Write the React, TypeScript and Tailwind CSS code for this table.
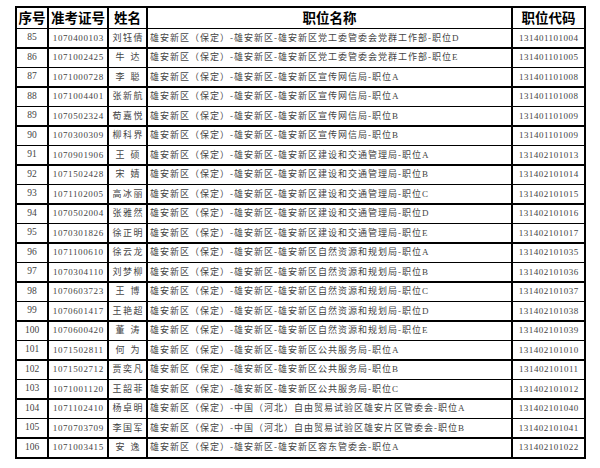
const rows: [string, string, string, string, string][] = [
  ["85", "1070400103", "刘钰倩", "雄安新区（保定）-雄安新区-雄安新区党工委管委会党群工作部-职位D", "131401101004"],
  ["86", "1071002425", "牛达", "雄安新区（保定）-雄安新区-雄安新区党工委管委会党群工作部-职位E", "131401101005"],
  ["87", "1071000728", "李聪", "雄安新区（保定）-雄安新区-雄安新区宣传网信局-职位A", "131401101008"],
  ["88", "1071004401", "张新航", "雄安新区（保定）-雄安新区-雄安新区宣传网信局-职位A", "131401101008"],
  ["89", "1070502324", "荀嘉悦", "雄安新区（保定）-雄安新区-雄安新区宣传网信局-职位B", "131401101009"],
  ["90", "1070300309", "柳科界", "雄安新区（保定）-雄安新区-雄安新区宣传网信局-职位B", "131401101009"],
  ["91", "1070901906", "王硕", "雄安新区（保定）-雄安新区-雄安新区建设和交通管理局-职位A", "131402101013"],
  ["92", "1071502428", "宋婧", "雄安新区（保定）-雄安新区-雄安新区建设和交通管理局-职位B", "131402101014"],
  ["93", "1071102005", "高冰丽", "雄安新区（保定）-雄安新区-雄安新区建设和交通管理局-职位C", "131402101015"],
  ["94", "1070502004", "张雅然", "雄安新区（保定）-雄安新区-雄安新区建设和交通管理局-职位D", "131402101016"],
  ["95", "1070301826", "徐正明", "雄安新区（保定）-雄安新区-雄安新区建设和交通管理局-职位E", "131402101017"],
  ["96", "1071100610", "徐云龙", "雄安新区（保定）-雄安新区-雄安新区自然资源和规划局-职位A", "131402101035"],
  ["97", "1070304110", "刘梦柳", "雄安新区（保定）-雄安新区-雄安新区自然资源和规划局-职位B", "131402101036"],
  ["98", "1070603723", "王博", "雄安新区（保定）-雄安新区-雄安新区自然资源和规划局-职位C", "131402101037"],
  ["99", "1070601417", "王艳超", "雄安新区（保定）-雄安新区-雄安新区自然资源和规划局-职位D", "131402101038"],
  ["100", "1070600420", "董涛", "雄安新区（保定）-雄安新区-雄安新区自然资源和规划局-职位E", "131402101039"],
  ["101", "1071502811", "何为", "雄安新区（保定）-雄安新区-雄安新区公共服务局-职位A", "131402101010"],
  ["102", "1071502712", "贾奕凡", "雄安新区（保定）-雄安新区-雄安新区公共服务局-职位B", "131402101011"],
  ["103", "1071001120", "王韶菲", "雄安新区（保定）-雄安新区-雄安新区公共服务局-职位C", "131402101012"],
  ["104", "1071102410", "杨卓明", "雄安新区（保定）-中国（河北）自由贸易试验区雄安片区管委会-职位A", "131402101040"],
  ["105", "1070703709", "李国军", "雄安新区（保定）-中国（河北）自由贸易试验区雄安片区管委会-职位B", "131402101041"],
  ["106", "1071003415", "安逸", "雄安新区（保定）-雄安新区-雄安新区容东管委会-职位A", "131402101022"],
];

const headers = ["序号", "准考证号", "姓名", "职位名称", "职位代码"];

// 正文用仿宋风格的浅灰色小字
const cell = "flex h-[18px] items-center bg-white leading-none whitespace-nowrap font-['Liberation_Serif','Noto_Sans_CJK_SC',serif] text-[#444]";

export default function App() {
  return (
    <div className="min-h-screen bg-white pl-[15px] pt-[6px]">
      <div className="grid w-[571px] grid-cols-[30px_58px_37px_363px_71px] gap-x-[2px] gap-y-[1.5px] border-2 border-black bg-black">
        {headers.map((h) => (
          <div
            key={h}
            className="flex h-[19.5px] items-center justify-center bg-white font-['Noto_Sans_CJK_SC',sans-serif] text-[13.5px] font-bold leading-none text-black"
          >
            {h}
          </div>
        ))}

        {rows.map(([no, ticket, name, title, code]) => (
          <div key={no} className="contents">
            <div className={`${cell} justify-center text-[9.5px]`}>{no}</div>
            <div className={`${cell} justify-center pl-[0.6px] text-[9px] tracking-[0.6px]`}>{ticket}</div>
            {name.length === 2 ? (
              <div className={`${cell} justify-center pl-[6px] text-[9px] tracking-[6px]`}>{name}</div>
            ) : (
              <div className={`${cell} justify-center pl-[1.5px] text-[9px] tracking-[1.5px]`}>{name}</div>
            )}
            <div className={`${cell} pl-[2px] text-[9px] tracking-[1px]`}>{title}</div>
            <div className={`${cell} justify-center pl-[0.5px] text-[9px] tracking-[0.5px]`}>{code}</div>
          </div>
        ))}
      </div>
    </div>
  );
}
